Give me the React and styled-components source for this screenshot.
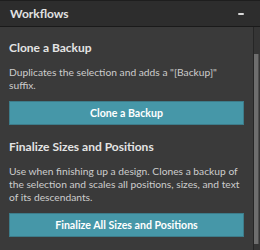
import React from "react";
import styled, { createGlobalStyle } from "styled-components";

const Global = createGlobalStyle`
  html, body { margin: 0; padding: 0; background: #3a3a3a; }
  body { font-family: "Lato", "Noto Sans", sans-serif; }
`;

const Panel = styled.div`
  width: 260px;
  height: 250px;
  display: flex;
  flex-direction: column;
  background: #3a3a3a;
  overflow: hidden;
`;

const Header = styled.div`
  height: 25px;
  flex: none;
  display: flex;
  align-items: center;
  justify-content: space-between;
  padding: 0 16px 0 10px;
  background: #2d2d2d;
  border-top: 1px solid #1e1e1e;
  border-bottom: 1px solid #1a1a1a;
  color: #e2e2e2;
  font-size: 12px;
  font-weight: 700;
`;

const Collapse = styled.span`
  width: 6px;
  height: 2px;
  background: #d8d8d8;
  border-radius: 1px;
`;

const Body = styled.div`
  flex: 1;
  display: flex;
  min-height: 0;
`;

const Content = styled.div`
  flex: 1;
  padding: 13px 9px 0 9px;
  display: flex;
  flex-direction: column;
`;

const Title = styled.div`
  color: #e4e4e4;
  font-size: 12px;
  font-weight: 700;
  line-height: 16px;
  margin-bottom: 10px;
`;

const Desc = styled.p`
  margin: 0 0 9px;
  color: #cdcdcd;
  font-size: 10.25px;
  line-height: 13px;
`;

const Button = styled.button`
  height: 24px;
  width: 100%;
  flex: none;
  border: 1px solid #3d7c8a;
  background: #4697a8;
  color: #ffffff;
  font-family: inherit;
  font-size: 10.6px;
  font-weight: 700;
  margin: 0 0 ${(p) => p.$after}px;
  padding: 0;
`;

const Track = styled.div`
  width: 6px;
  flex: none;
  border-left: 1px solid #262626;
  background: #353535;
  display: flex;
  flex-direction: column;
`;

const Thumb = styled.div`
  margin-top: 27px;
  height: 190px;
  width: 4px;
  background: #6e6e6e;
  border-right: 1px solid #4e4e4e;
`;

export default function App() {
  return (
    <>
      <Global />
      <Panel>
        <Header>
          <span>Workflows</span>
          <Collapse />
        </Header>
        <Body>
          <Content>
            <Title>Clone a Backup</Title>
            <Desc>Duplicates the selection and adds a "[Backup]" suffix.</Desc>
            <Button $after={14}>Clone a Backup</Button>
            <Title>Finalize Sizes and Positions</Title>
            <Desc>
              Use when finishing up a design. Clones a backup of the selection
              and scales all positions, sizes, and text of its descendants.
            </Desc>
            <Button $after={0}>Finalize All Sizes and Positions</Button>
          </Content>
          <Track>
            <Thumb />
          </Track>
        </Body>
      </Panel>
    </>
  );
}
